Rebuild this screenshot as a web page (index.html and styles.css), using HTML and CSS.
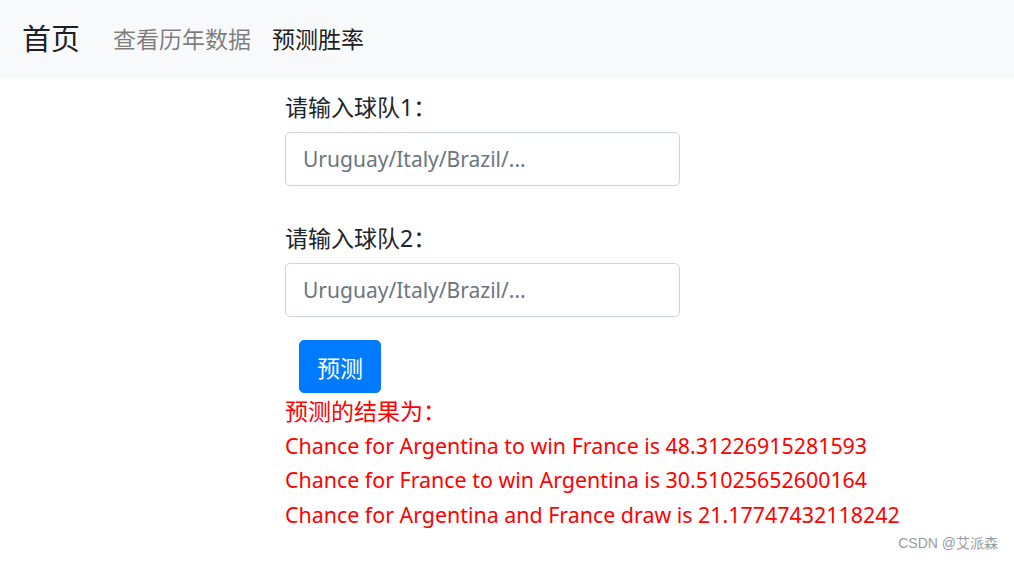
FILE: index.html
```html
<!DOCTYPE html>
<html lang="zh">
<head>
<meta charset="utf-8">
<title>预测胜率</title>
<link rel="stylesheet" href="styles.css">
</head>
<body>
<nav class="navbar">
  <a class="brand" href="#">首页</a>
  <a class="nav-link" href="#">查看历年数据</a>
  <a class="nav-link active" href="#">预测胜率</a>
</nav>
<main class="content">
  <form class="form">
    <label class="label">请输入球队1：</label>
    <input class="input" type="text" placeholder="Uruguay/Italy/Brazil/...">
    <label class="label label-second">请输入球队2：</label>
    <input class="input" type="text" placeholder="Uruguay/Italy/Brazil/...">
    <div class="actions"><button class="btn" type="button">预测</button></div>
  </form>
  <div class="result">
    <p class="result-title">预测的结果为：</p>
    <p>Chance for Argentina to win France is 48.31226915281593</p>
    <p>Chance for France to win Argentina is 30.51025652600164</p>
    <p>Chance for Argentina and France draw is 21.17747432118242</p>
  </div>
</main>
<div class="watermark">CSDN @艾派森</div>
</body>
</html>
```
FILE: styles.css
```css
html, body {
  margin: 0;
  padding: 0;
  background: #fff;
}
body {
  font-family: "Noto Sans", "Noto Sans CJK SC", sans-serif;
  font-size: 23px;
  line-height: 1.5;
  color: #212529;
  height: 562px;
  overflow: hidden;
}
.navbar {
  display: flex;
  align-items: center;
  height: 78px;
  background: #f8f9fa;
  padding: 0 22px;
  box-sizing: border-box;
}
.brand {
  font-size: 29px;
  color: rgba(0,0,0,.9);
  text-decoration: none;
  margin-right: 33px;
  margin-top: -1px;
}
.nav-link {
  color: rgba(0,0,0,.5);
  text-decoration: none;
  font-size: 23px;
  margin-right: 21px;
}
.nav-link.active {
  color: rgba(0,0,0,.9);
}
.content {
  padding-left: 285px;
}
.form {
  display: flex;
  flex-direction: column;
  align-items: flex-start;
  padding-top: 12px;
}
.label {
  display: block;
  margin-bottom: 8px;
  line-height: 34px;
}
.label-second {
  margin-top: 35px;
}
.input {
  width: 395px;
  height: 54px;
  box-sizing: border-box;
  border: 1px solid #ced4da;
  border-radius: 5px;
  padding: 0 17px;
  font-family: inherit;
  font-size: 21px;
  color: #495057;
  background: #fff;
}
.input::placeholder {
  color: #6c757d;
}
.actions {
  padding: 23px 0 1px 14px;
}
.btn {
  width: 82px;
  height: 53px;
  background: #007bff;
  border: 1px solid #007bff;
  border-radius: 5px;
  color: #fff;
  font-family: inherit;
  font-size: 23px;
  padding: 0;
}
.result {
  color: #ff0000;
  font-size: 21.4px;
}
.result p {
  margin: 0;
  line-height: 34.5px;
}
.result .result-title {
  font-size: 23px;
}
.watermark {
  position: absolute;
  right: 16px;
  bottom: 8px;
  font-size: 14px;
  color: #9a9a9a;
  font-family: "Liberation Sans", "Noto Sans CJK SC", sans-serif;
}
```
